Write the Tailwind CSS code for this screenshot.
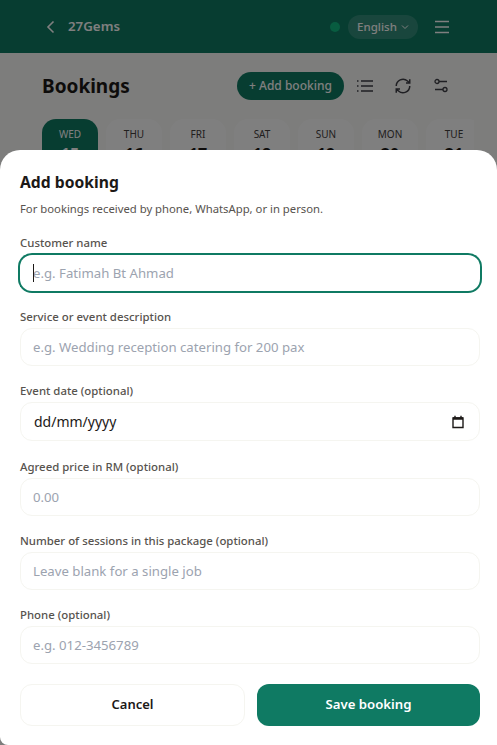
<!DOCTYPE html>
<html lang="en">
<head>
    <meta charset="UTF-8">
    <meta name="viewport" content="width=device-width, initial-scale=1.0">
    <title>Add booking</title>
    <script src="https://cdn.jsdelivr.net/npm/@tailwindcss/browser@4"></script>
</head>
<body class="relative h-[745px] overflow-hidden bg-[#fafaf8] font-['Noto_Sans',sans-serif]">
    <!-- page behind the sheet -->
    <header class="flex h-[53px] items-center bg-[#0f7a63] pl-[43px] pr-[47px] text-white">
        <svg class="h-4 w-4" viewBox="0 0 16 16" fill="none" stroke="currentColor" stroke-width="1.6"><path d="M10.5 2.5 5 8l5.500 5.500"/></svg>
        <span class="ml-[9px] text-[13.300px] font-semibold">27Gems</span>
        <span class="ml-auto h-2.5 w-2.5 rounded-full bg-[#10b981]"></span>
        <div class="ml-2 flex h-6 w-[70px] items-center justify-center gap-1 rounded-full bg-white/15 text-[11.500px] font-medium">
            English
            <svg class="h-2 w-2" viewBox="0 0 8 8" fill="none" stroke="currentColor"><path d="M1 2.500 4 5.500 7 2.500"/></svg>
        </div>
        <svg class="ml-[16px] h-4 w-4" viewBox="0 0 16 16" fill="none" stroke="currentColor" stroke-width="1.300"><path d="M1 2.500h14M1 8h14M1 13.500h14"/></svg>
    </header>
    <main class="px-[42px] pt-[19px]">
        <div class="flex h-[28px] items-center">
            <h1 class="text-[19px] font-bold text-[#1c1917]">Bookings</h1>
            <button class="ml-auto h-[28px] w-[107px] rounded-full bg-[#0f7a63] text-[12px] font-medium text-white">+ Add booking</button>
            <svg class="ml-[13px] h-4 w-4 text-[#3f3f46]" viewBox="0 0 16 16" fill="none" stroke="currentColor" stroke-width="1.300"><path d="M4 3h12M4 8h12M4 13h12M0 3h1.500M0 8h1.500M0 13h1.500"/></svg>
            <svg class="ml-[21px] h-[18px] w-[18px] text-[#3f3f46]" viewBox="0 0 24 24" fill="none" stroke="currentColor" stroke-width="2"><path d="M3 12a9 9 0 0 1 15-6.700L21 8M21 3v5h-5M21 12a9 9 0 0 1-15 6.700L3 16M3 21v-5h5"/></svg>
            <svg class="ml-[21px] mr-[6px] h-4 w-4 text-[#3f3f46]" viewBox="0 0 16 16" fill="none" stroke="currentColor" stroke-width="1.300"><circle cx="4" cy="3.500" r="2"/><circle cx="12" cy="11.500" r="2"/><path d="M6 3.500h8M2 11.500h8"/></svg>
        </div>
        <div class="mt-[19px] flex w-[432px] gap-2 overflow-hidden">
            <div class="h-[80px] w-14 shrink-0 rounded-[14px] bg-[#0f7a63] pt-[8px] text-center text-[10px] text-white">WED<div class="text-[16px] font-bold">15</div></div>
            <div class="h-[80px] w-14 shrink-0 rounded-[14px] bg-white pt-[8px] text-center text-[10px] text-[#44403c]">THU<div class="text-[16px] font-bold text-[#1c1917]">16</div></div>
            <div class="h-[80px] w-14 shrink-0 rounded-[14px] bg-white pt-[8px] text-center text-[10px] text-[#44403c]">FRI<div class="text-[16px] font-bold text-[#1c1917]">17</div></div>
            <div class="h-[80px] w-14 shrink-0 rounded-[14px] bg-white pt-[8px] text-center text-[10px] text-[#44403c]">SAT<div class="text-[16px] font-bold text-[#1c1917]">18</div></div>
            <div class="h-[80px] w-14 shrink-0 rounded-[14px] bg-white pt-[8px] text-center text-[10px] text-[#44403c]">SUN<div class="text-[16px] font-bold text-[#1c1917]">19</div></div>
            <div class="h-[80px] w-14 shrink-0 rounded-[14px] bg-white pt-[8px] text-center text-[10px] text-[#44403c]">MON<div class="text-[16px] font-bold text-[#1c1917]">20</div></div>
            <div class="h-[80px] w-14 shrink-0 rounded-[14px] bg-white pt-[8px] text-center text-[10px] text-[#44403c]">TUE<div class="text-[16px] font-bold text-[#1c1917]">21</div></div>
        </div>
    </main>

    <!-- overlay and sheet -->
    <div class="absolute inset-0 bg-black/50"></div>
    <div class="absolute inset-x-0 top-[150px] h-[595px] rounded-t-[20px] rounded-bl-[8px] bg-white pl-5 pr-[17px] pt-[21px]">
        <h2 class="text-[15.700px] leading-[22px] font-bold text-[#1c1917]">Add booking</h2>
        <p class="mt-[8px] text-[11.300px] leading-4 text-[#57534e]">For bookings received by phone, WhatsApp, or in person.</p>
        <label class="mt-[18px] block text-[11.400px] leading-4 font-medium text-[#57534e]">Customer name</label>
        <div class="relative mt-[4px]">
            <input class="block h-[36px] w-full rounded-xl pl-[13px] text-[13.200px] outline-none ring-2 ring-[#0f7a63] placeholder:text-[#9ca3af]" placeholder="e.g. Fatimah Bt Ahmad">
            <span class="absolute left-[13px] top-[9px] h-[18px] w-px bg-[#1c1917]"></span>
        </div>
        <label class="mt-[18px] block text-[11.400px] leading-4 font-medium text-[#57534e]">Service or event description</label>
        <input class="mt-[3px] block h-[38px] w-full rounded-xl border border-[#f5f5f0] pl-[12px] text-[13.200px] outline-none placeholder:text-[#9ca3af]" placeholder="e.g. Wedding reception catering for 200 pax">
        <label class="mt-[17px] block text-[11.400px] leading-4 font-medium text-[#57534e]">Event date (optional)</label>
        <div class="mt-[3px] flex h-[39px] w-full items-center justify-between rounded-xl border border-[#f5f5f0] pl-[13px] pr-[14px] text-[14px] text-[#1c1917]">
            dd/mm/yyyy
            <svg class="h-[14px] w-[14px]" viewBox="0 0 14 14" fill="none" stroke="#1c1917" stroke-width="1.400"><path d="M2 3h10v9.500H2z"/><path d="M2 3.500h10" stroke-width="2.500"/><path d="M4 .8v2M10 .8v2"/></svg>
        </div>
        <label class="mt-[18px] block text-[11.400px] leading-4 font-medium text-[#57534e]">Agreed price in RM (optional)</label>
        <input class="mt-[3px] block h-[38px] w-full rounded-xl border border-[#f5f5f0] pl-[12px] text-[13.200px] outline-none placeholder:text-[#9ca3af]" placeholder="0.00">
        <label class="mt-[17px] block text-[11.400px] leading-4 font-medium text-[#57534e]">Number of sessions in this package (optional)</label>
        <input class="mt-[3px] block h-[38px] w-full rounded-xl border border-[#f5f5f0] pl-[12px] text-[13.200px] outline-none placeholder:text-[#9ca3af]" placeholder="Leave blank for a single job">
        <label class="mt-[17px] block text-[11.400px] leading-4 font-medium text-[#57534e]">Phone (optional)</label>
        <input class="mt-[3px] block h-[38px] w-full rounded-xl border border-[#f5f5f0] pl-[12px] text-[13.200px] outline-none placeholder:text-[#9ca3af]" placeholder="e.g. 012-3456789">
        <div class="mt-[20px] flex gap-3">
            <button class="h-[42px] w-[225px] rounded-xl border border-[#f5f5f0] text-[13px] font-semibold text-[#1c1917]">Cancel</button>
            <button class="h-[42px] flex-1 rounded-xl bg-[#0f7a63] text-[13.200px] font-semibold text-white">Save booking</button>
        </div>
    </div>
</body>
</html>
